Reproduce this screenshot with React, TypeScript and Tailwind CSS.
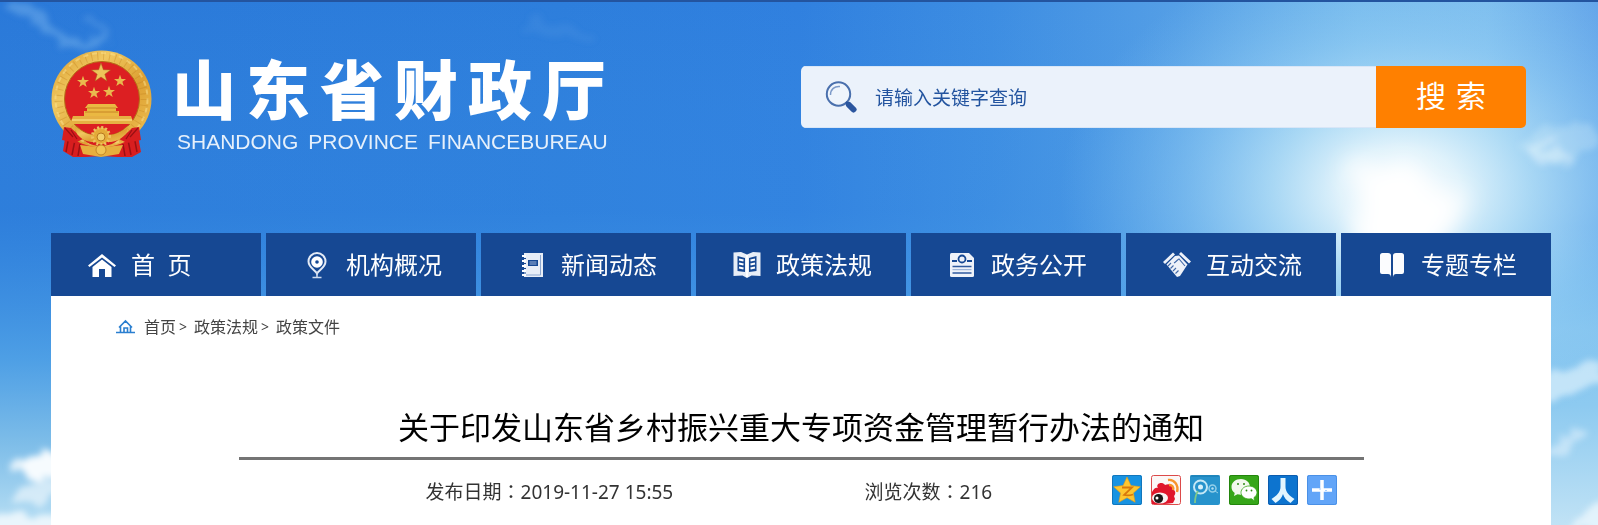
import type { ReactNode } from 'react';

interface NavItem {
  label: string;
  icon: ReactNode;
}

function starPoints(cx: number, cy: number, r: number, inner = 0.4) {
  return Array.from({ length: 10 }, (_, i) => {
    const radius = i % 2 === 0 ? r : r * inner;
    const angle = (Math.PI / 5) * i - Math.PI / 2;
    return `${(cx + radius * Math.cos(angle)).toFixed(1)},${(cy + radius * Math.sin(angle)).toFixed(1)}`;
  }).join(' ');
}

function Sky() {
  return (
    <svg
      className="absolute inset-0 h-full w-full"
      viewBox="0 0 1598 525"
      preserveAspectRatio="none"
      aria-hidden="true"
    >
      <defs>
        <linearGradient id="sky-x" x1="0" y1="0" x2="1" y2="0">
          <stop offset="0" stopColor="#2a79d9" />
          <stop offset="0.35" stopColor="#2d7edc" />
          <stop offset="0.5" stopColor="#3080df" />
          <stop offset="0.62" stopColor="#3d8de2" />
          <stop offset="0.74" stopColor="#559fe6" />
          <stop offset="0.85" stopColor="#73b8ec" />
          <stop offset="0.93" stopColor="#7bbcee" />
          <stop offset="1" stopColor="#63a4e9" />
        </linearGradient>
        <linearGradient id="sky-y" x1="0" y1="0" x2="0" y2="1">
          <stop offset="0" stopColor="#4fa5e8" stopOpacity="0" />
          <stop offset="0.4" stopColor="#3d93e4" stopOpacity="0.2" />
          <stop offset="0.68" stopColor="#56a8e8" stopOpacity="0.8" />
          <stop offset="0.84" stopColor="#86c4ea" stopOpacity="0.9" />
          <stop offset="1" stopColor="#b8dff4" />
        </linearGradient>
        <linearGradient id="sky-right" x1="0" y1="0" x2="0" y2="1">
          <stop offset="0" stopColor="#8accf2" stopOpacity="0" />
          <stop offset="0.35" stopColor="#8ac8f0" stopOpacity="0.9" />
          <stop offset="0.6" stopColor="#8dcaf0" />
          <stop offset="1" stopColor="#c0e2f5" />
        </linearGradient>
        <radialGradient id="halo">
          <stop offset="0" stopColor="#ffffff" />
          <stop offset="0.18" stopColor="#ecf9fd" stopOpacity="0.9" />
          <stop offset="0.38" stopColor="#bfe6f8" stopOpacity="0.75" />
          <stop offset="0.62" stopColor="#9ad2f5" stopOpacity="0.5" />
          <stop offset="1" stopColor="#7cc0f0" stopOpacity="0" />
        </radialGradient>
        <filter id="cloud" x="-30%" y="-30%" width="160%" height="160%">
          <feTurbulence type="fractalNoise" baseFrequency="0.05" numOctaves="3" seed="4" />
          <feDisplacementMap in="SourceGraphic" scale="22" xChannelSelector="R" yChannelSelector="G" />
          <feGaussianBlur stdDeviation="3" />
        </filter>
        <filter id="glow" x="-50%" y="-50%" width="200%" height="200%">
          <feTurbulence type="fractalNoise" baseFrequency="0.03" numOctaves="3" seed="9" />
          <feDisplacementMap in="SourceGraphic" scale="36" xChannelSelector="R" yChannelSelector="G" />
          <feGaussianBlur stdDeviation="11" />
        </filter>
      </defs>
      <rect width="1598" height="525" fill="url(#sky-x)" />
      <rect width="1598" height="525" fill="url(#sky-y)" />
      <rect x="1545" y="225" width="53" height="300" fill="url(#sky-right)" />
      <ellipse cx="1400" cy="190" rx="340" ry="250" fill="url(#halo)" />
      <g filter="url(#glow)" fill="#ffffff">
        <ellipse cx="1408" cy="220" rx="56" ry="44" />
        <ellipse cx="1380" cy="176" rx="34" ry="16" />
        <ellipse cx="1442" cy="202" rx="30" ry="20" opacity="0.8" />
      </g>
      <g filter="url(#cloud)" fill="none" stroke="#86bdf0" strokeLinecap="round">
        <path d="M14 4 34 14 50 30 74 42 106 38" strokeWidth="8" opacity="0.4" />
        <path d="M88 20 108 32" strokeWidth="8" opacity="0.25" />
        <path d="M530 20c20 8 40 6 60 14" strokeWidth="12" opacity="0.1" />
      </g>
      <g filter="url(#cloud)" fill="#e9f6fd">
        <path d="M1515 150 1540 124 1575 120 1598 132V150L1560 164Z" opacity="0.25" />
        <path d="M1525 152 1548 134 1560 130 1540 152 1564 146 1572 156 1540 164Z" opacity="0.45" />
        <path d="M1535 374 1560 370 1605 360V382L1575 390 1540 402Z" opacity="0.6" />
        <path d="M1540 452 1560 440 1584 432 1576 444 1545 460Z" opacity="0.5" />
        <path d="M1560 530 1582 514 1605 500V530Z" opacity="0.85" />
      </g>
      <g filter="url(#cloud)" fill="#f6fbfe">
        <ellipse cx="20" cy="466" rx="12" ry="8" opacity="0.8" />
        <ellipse cx="44" cy="468" rx="18" ry="14" />
        <ellipse cx="34" cy="493" rx="24" ry="11" opacity="0.6" />
        <ellipse cx="20" cy="524" rx="44" ry="12" opacity="0.8" />
      </g>
    </svg>
  );
}

function Emblem() {
  return (
    <svg className="h-[108px] w-[101px] shrink-0" viewBox="0 0 101 108" aria-hidden="true">
      <defs>
        <linearGradient id="gold" x1="0" y1="0" x2="1" y2="1">
          <stop offset="0" stopColor="#d9992a" />
          <stop offset="0.3" stopColor="#f0c860" />
          <stop offset="0.6" stopColor="#dda032" />
          <stop offset="1" stopColor="#f0c457" />
        </linearGradient>
      </defs>
      <path d="M16 76c10 10 20 14 34 15 15-1 26-5 35-15l5 26-9 5H66l-15-1-16 1H22l-10-6z" fill="#d81e1f" />
      <path d="M18 86l-3 16M24 90l-3 15M29 94l-2 12M83 86l3 16M77 90l3 15M72 94l2 12" stroke="#991013" strokeWidth="1.5" />
      <ellipse cx="50.5" cy="49" rx="50" ry="48.5" fill="url(#gold)" />
      <circle cx="50.5" cy="49" r="43" fill="none" stroke="#c07e1c" strokeWidth="8" strokeDasharray="1 5" opacity="0.35" />
      <circle cx="50.5" cy="49" r="46" fill="none" stroke="#fbe392" strokeWidth="2" strokeDasharray="5 4" opacity="0.5" />
      <ellipse cx="51" cy="49" rx="37.5" ry="37.5" fill="#dc1f22" stroke="#b46e16" />
      <polygon points={starPoints(50, 23, 10)} fill="#edc35a" stroke="#a9611a" strokeWidth="0.5" />
      <polygon points={starPoints(32, 32, 6.3)} fill="#e9b94e" />
      <polygon points={starPoints(69, 31, 6.3)} fill="#e9b94e" />
      <polygon points={starPoints(43, 43, 6.3)} fill="#e9b94e" />
      <polygon points={starPoints(58, 42, 6.3)} fill="#e9b94e" />
      <path d="M37 54h27l3 4h-2v3h3v5H33v-5h3v-3h-2z" fill="#eab842" />
      <path d="M36 58h29M34 62h33" stroke="#c07a20" strokeWidth="0.8" />
      <path d="M22 66h58l3 8H19z" fill="#e6b043" />
      <path d="M21 70h60" stroke="#f8d979" strokeWidth="1.5" />
      <path d="M13 77l7 1c8 8 16 12 22 12h17c7 0 15-4 22-12l7-1 2 13-14 3-8-4c-5 5-11 7-18 7s-13-2-18-7l-8 4-13-3z" fill="#d81e1f" />
      <path d="M14 78l8 9M87 78l-8 9M20 80l6 9M81 80l-6 9" stroke="#991013" strokeWidth="1.2" />
      <path d="M24 76c8 7 14 9 20 9h13c7 0 14-3 20-9l-2 8c-6 6-11 8-17 8H43c-7 0-12-2-17-8z" fill="url(#gold)" />
      <circle cx="50" cy="86" r="8.500" fill="#e4aa38" stroke="#eec260" strokeWidth="3" strokeDasharray="2 2" />
      <circle cx="50" cy="87" r="4" fill="#f4d16c" stroke="#b87820" />
      <path d="M29 95 46 97q4-3 8 0l18-2-4 9-18 3-18-3z" fill="#e7af3e" />
      <circle cx="50" cy="100" r="5" fill="#f1c453" stroke="#b87820" strokeWidth="0.8" />
    </svg>
  );
}

const NAV: NavItem[] = [
  {
    label: '首\u00a0\u00a0页',
    icon: (
      <>
        <path d="M0 14.500 14 3l14 11.500-1.500 1.500L14 6.500 1.500 16 0 14.500z" fill="#fff" />
        <path d="M4.500 16 14 8.500l9.500 7.500v10H17v-8h-6v8H4.500z" fill="#fff" />
      </>
    ),
  },
  {
    label: '机构概况',
    icon: (
      <>
        <path
          d="M14 22.500c-1.500-3-8.500-6-8.500-12a8.500 8.500 0 0 1 17 0c0 6-7 9-8.500 12z"
          fill="none"
          stroke="#e4ebf6"
          strokeWidth="2"
        />
        <circle cx="14" cy="11" r="5.800" fill="#fff" />
        <circle cx="14" cy="11" r="1.800" fill="#164893" />
        <path d="M14 21v5M9.500 26.500h9" stroke="#cfdbed" strokeWidth="1.500" />
      </>
    ),
  },
  {
    label: '新闻动态',
    icon: (
      <>
        <path d="M6 2h19v24H6z" fill="#e8eef7" />
        <path d="M22.500 4v20H8" stroke="#8ea8d0" fill="none" />
        <path d="M10 9h10v6H10z" fill="#164893" />
        <path d="M11.500 11h7M11.500 13h7" stroke="#9fb4d8" />
        <path d="M4 5h4M4 10h4M4 15h4M4 20h4M4 24h4" stroke="#fff" strokeWidth="2" />
        <path d="M6 7.500h2M6 12.500h2M6 17.500h2M6 22h2" stroke="#164893" />
      </>
    ),
  },
  {
    label: '政策法规',
    icon: (
      <>
        <path d="M.5 1.500 8 1l6 2.500L20 1l7.500.5V25l-9-.5-4.500 2.500-4.500-2.500-9 .5z" fill="#e8eef7" />
        <path d="M4.500 5 12 7v14l-7.500-1zM23.500 5 16 7v14l7.500-1z" fill="#164893" />
        <path d="m6 8.500 4.500 1M6 12.500l4.500 1M6 16.500l4.500 1M22 8.500l-4.500 1M22 12.500l-4.500 1M22 16.500l-4.500 1" stroke="#fff" strokeWidth="1.800" />
        <path d="M14 4v22" stroke="#fff" strokeWidth="2" />
      </>
    ),
  },
  {
    label: '政务公开',
    icon: (
      <>
        <path d="M3.500 2H21l5 5v17.500q0 1.500-1.500 1.500h-21Q2 26 2 24.500v-21Q2 2 3.500 2z" fill="#eef2f9" />
        <path d="M4 10h5M19 10h5" stroke="#164893" strokeWidth="1.800" />
        <circle cx="14" cy="8" r="3.500" fill="none" stroke="#164893" strokeWidth="1.800" />
        <path d="M4.500 15.500h19M4.500 22h19" stroke="#2f5a9f" strokeWidth="1.600" />
        <path d="M4.500 18.700h19" stroke="#8ea8d0" />
      </>
    ),
  },
  {
    label: '互动交流',
    icon: (
      <>
        <path d="M0 11 10 1.500l2 2L2 13zM18 1l10 9.500-2 2L16 3z" fill="#eef2f9" />
        <path d="M3.500 13.500 12 5l4-.5 8.500 9L17 25l-3 1z" fill="#eef2f9" />
        <path d="M11 12c2-1 3-3 5-4l6 7M5 15l3-3M7.500 17.500l3-3M10 20l3-3M12.500 22.500l3-3" stroke="#4269a8" strokeWidth="1.100" fill="none" />
      </>
    ),
  },
  {
    label: '专题专栏',
    icon: (
      <path d="M2 4.500Q2 2 4.500 2H10q3 0 3 2.500v21.500q-.5-3-3-3H4q-2 0-2-2zM26 4.500Q26 2 23.500 2H18q-3 0-3 2.500v21.500q.5-3 3-3h6q2 0 2-2z" fill="#fbfcfe" />
    ),
  },
];

const SHARES: NavItem[] = [
  {
    label: 'QQ空间',
    icon: (
      <>
        <rect width="30" height="30" rx="2" fill="#1893e2" />
        <rect x=".5" y=".5" width="29" height="29" rx="2" fill="none" stroke="#1276bb" />
        <polygon points={starPoints(15, 16, 14, 0.48)} fill="#fdc62f" stroke="#e89a12" strokeWidth="0.6" />
        <path d="M10 12.500h10l-8 7.500c4 1 6 .5 9-.5" stroke="#d8790b" strokeWidth="1.800" fill="none" />
      </>
    ),
  },
  {
    label: '新浪微博',
    icon: (
      <>
        <rect x=".5" y=".5" width="29" height="29" rx="2" fill="#fbf7f6" stroke="#dc4a4a" />
        <path d="M1 17c2-4 4-5 6-4-3-4 4-7 7-3 4-2 8 0 7 4 4 1 4 5 2 7l1 3-2 4-8 1H1z" fill="#e0162b" />
        <ellipse cx="9" cy="23" rx="8" ry="5.500" fill="#f6f3f3" />
        <circle cx="7.500" cy="23.500" r="4.600" fill="#171717" />
        <circle cx="6" cy="23" r="1.500" fill="#fff" />
        <path d="M17 5c6-1 11 5 9 12M18 10c3-.5 5 2 4 5" stroke="#f7962c" strokeWidth="2.400" fill="none" />
      </>
    ),
  },
  {
    label: '腾讯微博',
    icon: (
      <>
        <rect width="30" height="30" rx="2" fill="#2793cc" />
        <path d="M.5 1h29" stroke="#1879ac" />
        <circle cx="10.500" cy="12" r="6.500" fill="none" stroke="#c5e8f6" strokeWidth="2" />
        <circle cx="10.500" cy="12" r="2.500" fill="#d9f1fa" />
        <circle cx="22.500" cy="13.500" r="3.500" fill="none" stroke="#93cfe9" strokeWidth="1.500" />
        <circle cx="22.500" cy="13.500" r="1.200" fill="#b3def1" />
        <path d="M8 16c-2 3-3 7-3 12" stroke="#7fc889" strokeWidth="1.800" fill="none" />
        <path d="m25 16 3 2" stroke="#93cfe9" />
      </>
    ),
  },
  {
    label: '微信',
    icon: (
      <>
        <rect width="30" height="30" rx="2" fill="#36a619" />
        <rect x=".5" y=".5" width="29" height="29" rx="2" fill="none" stroke="#23850c" />
        <path d="M12 4c-5.500 0-9.500 3.500-9.500 8 0 2.500 1.200 4.500 3.200 6L5 21l3.500-1.800c1 .3 2.300.5 3.500.5 5.500 0 9-3.500 9-7.700S17.500 4 12 4z" fill="#f2f9ee" />
        <path d="M20 11c-4.500 0-8 3-8 6.500s3.500 6.500 8 6.500l2.500-.3L25.500 26l-.5-3.500c2-1.300 3-3 3-5 0-3.500-3.500-6.500-8-6.500z" fill="#fff" stroke="#36a619" strokeWidth="0.8" />
        <g fill="#2d8a15">
          <circle cx="9" cy="9" r="1" />
          <circle cx="15" cy="9" r="1" />
          <circle cx="17.500" cy="15.500" r="0.9" />
          <circle cx="22.500" cy="15.500" r="0.9" />
        </g>
      </>
    ),
  },
  {
    label: '人人网',
    icon: (
      <>
        <rect width="30" height="30" rx="2" fill="#0d74cf" />
        <rect x=".5" y=".5" width="29" height="29" rx="2" fill="none" stroke="#0c5cae" />
        <path d="M12.500 3h5v9c0 5 4 9 9 12l-4 4c-4-2.500-6.500-5.500-7.500-9-1 3.500-3.500 6.500-7.500 9l-4-4c5-3 9-7 9-12z" fill="#e4f6fe" />
      </>
    ),
  },
  {
    label: '更多',
    icon: (
      <>
        <rect width="30" height="30" rx="2" fill="#62a5f8" />
        <rect x=".5" y=".5" width="29" height="29" rx="2" fill="none" stroke="#4a90e6" />
        <path d="M15 5v20M5 15h20" stroke="#fff" strokeWidth="3.500" />
        <path d="M18 15.500h2M12 14h2" stroke="#a9cffc" />
      </>
    ),
  },
];

const TITLE = ['山', '东', '省', '财', '政', '厅'];

function Header() {
  return (
    <header className="flex items-start justify-between pt-12 pr-[25px] pb-[75px]">
      <a href="#" className="flex gap-5 text-white" aria-label="山东省财政厅">
        <Emblem />
        <span className="flex flex-col pt-2">
          <span className="flex gap-[10px] text-[64px] leading-[64px] font-black">
            {TITLE.map((char) => (
              <span key={char}>{char}</span>
            ))}
          </span>
          <span className="mt-2 flex gap-[10px] pl-[5px] text-[21px] leading-6 text-[#e6f0fb] font-['Liberation_Sans',sans-serif]">
            <span>SHANDONG</span>
            <span>PROVINCE</span>
            <span>FINANCEBUREAU</span>
          </span>
        </span>
      </a>
      <form
        className="mt-4 flex h-[62px] w-[725px] overflow-hidden rounded-[5px]"
        onSubmit={(e) => e.preventDefault()}
      >
        <label className="flex flex-1 items-center gap-[18px] border-y border-[#d8e6f7] bg-[#ebf2fb] pl-6">
          <svg className="h-8 w-8 shrink-0" viewBox="0 0 32 32" aria-hidden="true">
            <circle cx="13.500" cy="13" r="11.700" fill="#eff5fc" stroke="#4a70ad" strokeWidth="2" />
            <path d="M5.500 14c0-6 4-9 9.500-8.500" stroke="#7d9ac8" strokeWidth="1.500" fill="none" />
            <path d="m21 21 3 3" stroke="#2b569f" strokeWidth="2.500" />
            <path d="m24 24 4.500 4.500" stroke="#2b569f" strokeWidth="6" strokeLinecap="round" />
          </svg>
          <input
            type="text"
            aria-label="关键字"
            placeholder="请输入关键字查询"
            className="min-w-0 flex-1 bg-transparent pt-0.5 text-[19px] text-[#23549f] outline-none placeholder:text-[#23549f]"
          />
        </label>
        <button
          type="submit"
          className="flex w-[150px] items-center justify-center gap-[10px] bg-[#ff8000] pb-0.5 text-[30px] leading-[44px] text-white"
        >
          <span>搜</span>
          <span>索</span>
        </button>
      </form>
    </header>
  );
}

function Nav() {
  return (
    <nav className="grid grid-cols-7 gap-[5px]">
      {NAV.map((item) => (
        <a
          key={item.label}
          href="#"
          className="flex h-[63px] items-center gap-[15px] bg-[#164893] pl-[37px] text-2xl whitespace-nowrap text-white"
        >
          <svg className="h-7 w-7 shrink-0" viewBox="0 0 28 28" aria-hidden="true">
            {item.icon}
          </svg>
          {item.label}
        </a>
      ))}
    </nav>
  );
}

function Breadcrumb() {
  return (
    <div className="flex items-center pl-[65px] text-base leading-6 text-[#444]">
      <svg className="mr-[9px] h-[18px] w-[19px]" viewBox="0 0 19 18" fill="none" aria-hidden="true">
        <path d="M3 9.500 9.500 3 16 9.500M4.500 8.500v6M14.500 8.500v6M8 14v-4h3.500v4" stroke="#2a7fd0" strokeWidth="1.600" />
        <path d="M0 14.500h19" stroke="#2a7fd0" strokeWidth="1.500" />
      </svg>
      <a href="#">首页</a>
      <span className="mx-[3px] w-3 text-sm leading-6">&gt;</span>
      <a href="#">政策法规</a>
      <span className="mx-[3px] w-3 text-sm leading-6">&gt;</span>
      <a href="#">政策文件</a>
    </div>
  );
}

function Colon() {
  return <span className="font-['Noto_Sans_CJK_TC',sans-serif]">：</span>;
}

export default function App() {
  return (
    <div className="relative flex min-h-screen flex-col border-t-2 border-[#23549f] font-['Noto_Sans','Noto_Sans_CJK_SC',sans-serif]">
      <Sky />
      <div className="relative flex flex-1 flex-col pr-[47px] pl-[51px]">
        <Header />
        <Nav />
        <main className="flex-1 bg-white pt-[19px]">
          <Breadcrumb />
          <article className="mx-auto mt-16 w-3/4">
            <h1 className="border-b-3 border-[#747474] pb-1.5 text-center text-[31px] leading-[48px] font-normal text-black">
              关于印发山东省乡村振兴重大专项资金管理暂行办法的通知
            </h1>
            <div className="flex items-start pt-[15px] pl-[187px] text-[19px] leading-8 text-[#333]">
              <p className="w-[439px]">
                发布日期
                <Colon />
                2019-11-27 15:55
              </p>
              <p className="w-[247px]">
                浏览次数
                <Colon />
                216
              </p>
              <div className="flex gap-[9px]">
                {SHARES.map((item) => (
                  <a key={item.label} href="#" aria-label={item.label}>
                    <svg className="h-[30px] w-[30px]" viewBox="0 0 30 30" aria-hidden="true">
                      {item.icon}
                    </svg>
                  </a>
                ))}
              </div>
            </div>
          </article>
        </main>
      </div>
    </div>
  );
}
